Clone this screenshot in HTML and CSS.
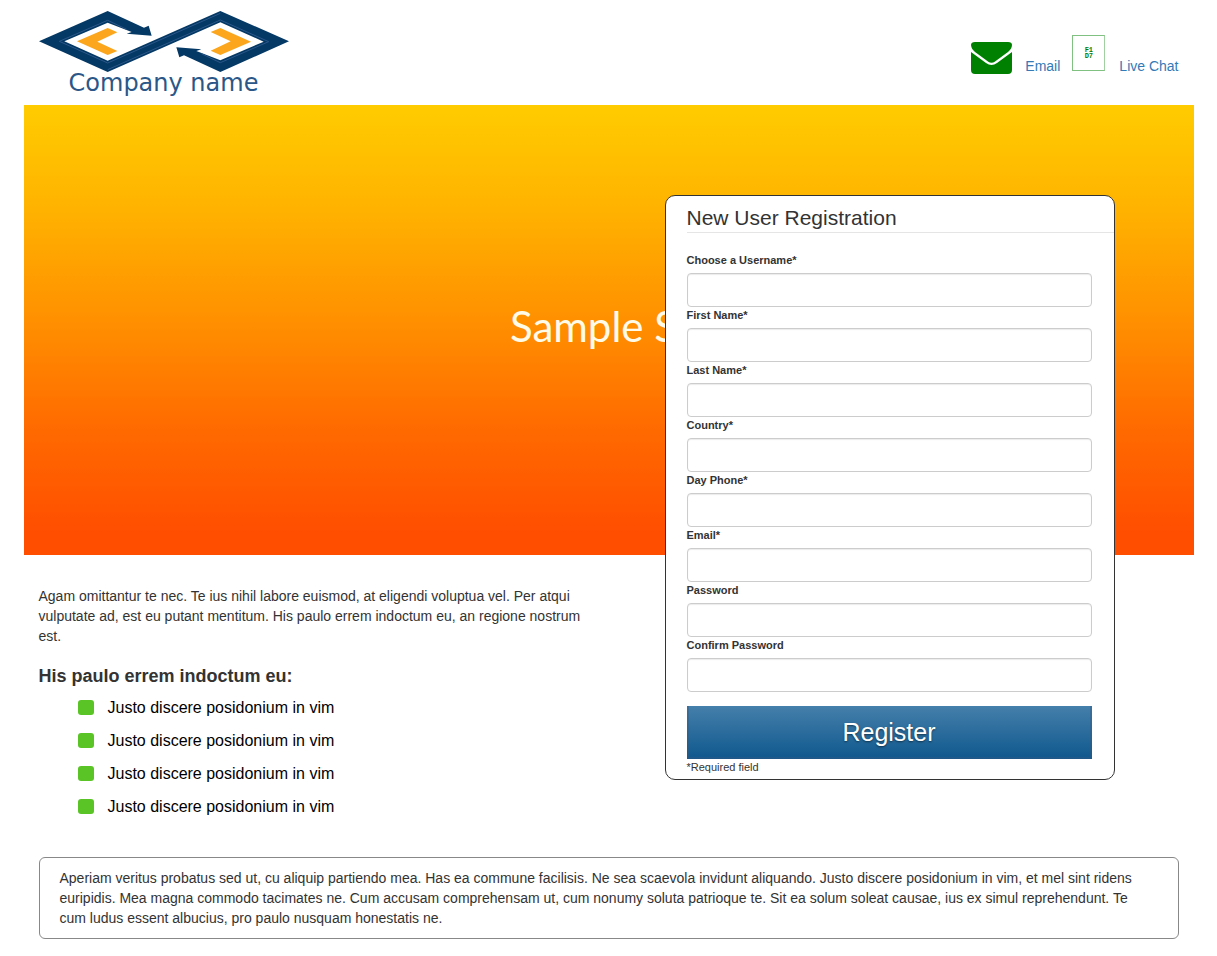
FILE: index.html
```html
<!DOCTYPE html>
<html lang="en">
<head>
<meta charset="utf-8">
<title>New User Registration</title>
<link rel="stylesheet" href="styles.css">
</head>
<body>
<div class="container">
  <header class="header">
    <a class="logo" href="#">
      <svg class="logo-mark" viewBox="27 33 750 183" preserveAspectRatio="none" aria-hidden="true">
        <path fill="#043865" d="M27 124 233 33 342 83 356 77 365 107 290 101 305 96 233 68 103 124 233 182 571 33 777 124 571 216 462 166 448 172 439 142 514 148 499 153 571 181 701 125 571 67 233 216Z"/>
        <path fill="none" stroke="#2b5788" stroke-width="3" d="M290 88 233 61 88 124 233 189 571 40M514 161 571 188 716 125 571 60 233 209"/>
        <path fill="#fba61c" d="M141 124 233 84 262 97 202 125 262 153 233 165ZM663 125 571 165 542 152 602 124 542 96 571 84Z"/>
      </svg>
      <span class="logo-name">Company name</span>
    </a>
    <nav class="contact">
      <svg class="mail-icon" viewBox="0 0 41 33" aria-hidden="true">
        <path fill="green" d="M4 1H37Q41 1 41 4C41 7 39 9 37 11L24 20.500Q20.500 23 17 20.500L4 11C2 9 0 7 0 4Q0 1 4 1Z"/>
        <path fill="green" d="M0 11 15 22Q20.500 26 26 22L41 11V29Q41 33 37 33H4Q0 33 0 29Z"/>
      </svg>
      <a class="contact-link" href="#">Email</a>
      <span class="chat-icon" aria-hidden="true">F1<br>D7</span>
      <a class="contact-link" href="#">Live Chat</a>
    </nav>
  </header>

  <section class="banner"><span class="banner-title">Sample S</span></section>

  <main class="content">
    <section class="intro">
      <p class="intro-text">Agam omittantur te nec. Te ius nihil labore euismod, at eligendi voluptua vel. Per atqui vulputate ad, est eu putant mentitum. His paulo errem indoctum eu, an regione nostrum est.</p>
      <h2 class="intro-title">His paulo errem indoctum eu:</h2>
      <ul class="features">
        <li class="feature">Justo discere posidonium in vim</li>
        <li class="feature">Justo discere posidonium in vim</li>
        <li class="feature">Justo discere posidonium in vim</li>
        <li class="feature">Justo discere posidonium in vim</li>
      </ul>
    </section>

    <form class="card">
      <h1 class="card-title">New User Registration</h1>
      <div class="fields">
        <label class="label" for="username">Choose a Username*</label>
        <input class="input" id="username" type="text">
        <label class="label" for="first">First Name*</label>
        <input class="input" id="first" type="text">
        <label class="label" for="last">Last Name*</label>
        <input class="input" id="last" type="text">
        <label class="label" for="country">Country*</label>
        <input class="input" id="country" type="text">
        <label class="label" for="phone">Day Phone*</label>
        <input class="input" id="phone" type="tel">
        <label class="label" for="email">Email*</label>
        <input class="input" id="email" type="email">
        <label class="label" for="password">Password</label>
        <input class="input" id="password" type="password">
        <label class="label" for="confirm">Confirm Password</label>
        <input class="input" id="confirm" type="password">
        <button class="register" type="submit">Register</button>
        <p class="note">*Required field</p>
      </div>
    </form>
  </main>

  <footer class="footer">Aperiam veritus probatus sed ut, cu aliquip partiendo mea. Has ea commune facilisis. Ne sea scaevola invidunt aliquando. Justo discere posidonium in vim, et mel sint ridens euripidis. Mea magna commodo tacimates ne. Cum accusam comprehensam ut, cum nonumy soluta patrioque te. Sit ea solum soleat causae, ius ex simul reprehendunt. Te cum ludus essent albucius, pro paulo nusquam honestatis ne.</footer>
</div>
</body>
</html>
```
FILE: styles.css
```css
* { box-sizing: border-box; }

body {
  margin: 0;
  background: #fff;
  color: #333;
  font: 14px/20px "Liberation Sans", Arial, sans-serif;
}

.container { max-width: 1170px; margin: 0 auto; }

.header {
  display: flex;
  justify-content: space-between;
  align-items: flex-start;
  height: 105px;
  padding: 11px 15px 0;
}

.logo {
  display: flex;
  flex-direction: column;
  align-items: center;
  width: 250px;
  text-decoration: none;
}
.logo-mark { display: block; width: 100%; height: 61px; }
.logo-name {
  color: #2b5788;
  font: 24px/22px "DejaVu Sans", sans-serif;
}

.contact { display: flex; align-items: flex-end; padding-top: 24px; }
.mail-icon { width: 41px; height: 33px; margin-right: 13px; }
.contact-link { color: #337ab7; line-height: 16px; text-decoration: none; }
.chat-icon {
  width: 33px;
  height: 36px;
  margin: 0 14px 3px 12px;
  padding-top: 11px;
  border: 1px solid #80c080;
  border-right-color: #a0d0a0;
  color: green;
  font: bold 7px/6px "Liberation Mono", monospace;
  text-align: center;
}

.banner {
  display: flex;
  align-items: center;
  justify-content: center;
  height: 450px;
  padding: 0 30px 8px 0;
  background: linear-gradient(#fc0 0%, #ffb400 22%, #ff9000 48%, #ff6a00 72%, #ff4e00 95%, #ff4e00 100%);
}
.banner-title { color: #fffbe8; font: 42px/50px Lato, sans-serif; }

.content { display: grid; grid-template-columns: 1fr 1fr; align-items: start; }
.intro { padding: 31px 15px 34px; }
.intro-text { margin: 0 0 20px; }
.intro-title { margin: 0 0 5px; font-size: 18px; line-height: 20px; }

.features { margin: 0; padding: 0 0 0 39px; list-style: none; }
.feature {
  display: flex;
  align-items: center;
  gap: 14px;
  color: #000;
  font-size: 16px;
  line-height: 33px;
}
.feature::before {
  content: "";
  width: 16px;
  height: 15px;
  border-radius: 3px;
  background: #5ac426;
}

.card {
  width: 450px;
  margin: -360px 79px 0 auto;
  padding: 10px 0 4px 21px;
  border: 1px solid #333;
  border-radius: 10px;
  background: #fff;
}
.card-title {
  margin: 0;
  padding-bottom: 2px;
  border-bottom: 1px solid #e5e5e5;
  font-size: 21px;
  font-weight: normal;
  line-height: 24px;
}
.fields { padding: 19px 22px 0 0; }
.label {
  display: block;
  font-size: 11px;
  font-weight: bold;
  line-height: 16px;
  padding-bottom: 5px;
}
.input {
  display: block;
  width: 100%;
  height: 34px;
  padding: 6px 12px;
  border: 1px solid #ccc;
  border-radius: 4px;
  background: #fff;
  box-shadow: inset 0 1px 1px rgba(0, 0, 0, .08);
  font: inherit;
}
.register {
  display: block;
  width: 100%;
  height: 53px;
  margin-top: 14px;
  padding: 0;
  border: 2px solid rgba(50, 90, 130, .4);
  border-top: 0;
  background: linear-gradient(#457fab, #0f588d) border-box;
  color: #fff;
  font: 25px/30px "Liberation Sans", Arial, sans-serif;
  text-shadow: 0 1px 2px rgba(0, 0, 0, .5);
}
.note { margin: 0; font-size: 11px; line-height: 16px; }

.footer {
  margin: 0 15px 17px;
  padding: 10px 20px;
  border: 1px solid #888;
  border-radius: 6px;
}
```
